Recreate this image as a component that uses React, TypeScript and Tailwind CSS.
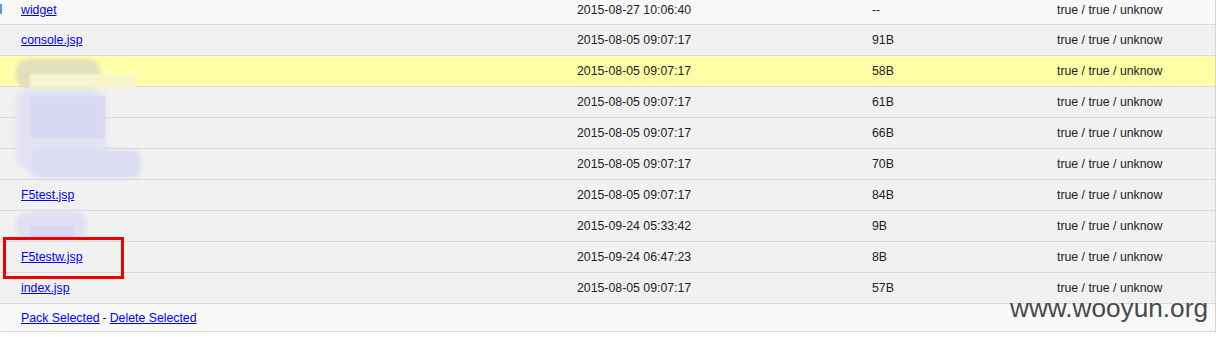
import React from "react";

interface Row {
  name: string;
  date: string;
  size: string;
  blurred?: boolean;
  highlight?: boolean;
}

const rows: Row[] = [
  { name: "console.jsp", date: "2015-08-05 09:07:17", size: "91B" },
  { name: "", date: "2015-08-05 09:07:17", size: "58B", blurred: true, highlight: true },
  { name: "", date: "2015-08-05 09:07:17", size: "61B", blurred: true },
  { name: "", date: "2015-08-05 09:07:17", size: "66B", blurred: true },
  { name: "", date: "2015-08-05 09:07:17", size: "70B", blurred: true },
  { name: "F5test.jsp", date: "2015-08-05 09:07:17", size: "84B" },
  { name: "", date: "2015-09-24 05:33:42", size: "9B", blurred: true },
  { name: "F5testw.jsp", date: "2015-09-24 06:47:23", size: "8B" },
  { name: "index.jsp", date: "2015-08-05 09:07:17", size: "57B" },
];

const cols = "grid grid-cols-[577px_295px_185px_1fr] items-center";

const FileRow: React.FC<{ row: Row }> = ({ row }) => (
  <div
    className={`${cols} h-[31px] border-b border-[#dadada] ${
      row.highlight ? "bg-[#ffffa8]" : "bg-[#f1f1f1]"
    }`}
  >
    <div className="pl-[21px]">
      {row.name && <a className="text-[#0000ff] underline">{row.name}</a>}
    </div>
    <div>{row.date}</div>
    <div>{row.size}</div>
    <div>true / true / unknow</div>
  </div>
);

export default function App() {
  return (
    <div className="relative w-[1216px] h-[337px] overflow-hidden bg-white text-[12.3px] text-[#222] font-['Liberation_Sans',Arial,sans-serif]">
      <div className="border-r border-[#d5d5d5]">
        {/* first row, cut off at the top */}
        <div className={`${cols} h-[31px] -mt-[6px] pt-[2px] border-b border-[#dadada] bg-[#f9f9f9]`}>
          <div className="pl-[21px]">
            <a className="text-[#0000ff] underline">widget</a>
          </div>
          <div>2015-08-27 10:06:40</div>
          <div>--</div>
          <div>true / true / unknow</div>
        </div>

        {rows.map((r, i) => (
          <FileRow key={i} row={r} />
        ))}

        {/* footer */}
        <div className="h-[28px] flex items-center pt-[2px] pl-[21px] border-b border-[#dadada] bg-[#f9f9f9]">
          <a className="text-[#0000ff] underline">Pack Selected</a>
          <span className="mx-[3px]">-</span>
          <a className="text-[#0000ff] underline">Delete Selected</a>
        </div>
      </div>

      {/* checkbox edge top-left */}
      <div className="absolute left-0 top-[4px] w-[2px] h-[10px] bg-[#5a9ae0]" />

      {/* mosaic blurs */}
      <div className="absolute left-[16px] top-[59px] w-[84px] h-[30px] rounded-[12px] bg-[#e0e0bc] blur-[2px]" />
      <div className="absolute left-[30px] top-[74px] w-[106px] h-[14px] bg-[#f6f6cc] blur-[1px]" />
      <div className="absolute left-[16px] top-[90px] w-[90px] h-[80px] rounded-[14px] bg-[#e2e2f4] blur-[2px]" />
      <div className="absolute left-[30px] top-[96px] w-[75px] h-[42px] bg-[#d8d8f2] blur-[1px]" />
      <div className="absolute left-[30px] top-[150px] w-[110px] h-[28px] rounded-[8px] bg-[#dcdcf3] blur-[2px]" />
      <div className="absolute left-[16px] top-[212px] w-[70px] h-[28px] rounded-[10px] bg-[#e0e0f2] blur-[2px]" />
      <div className="absolute left-[30px] top-[226px] w-[44px] h-[12px] bg-[#d6d6f2] blur-[1px]" />

      {/* highlight box */}
      <div className="absolute left-[3px] top-[237px] w-[121px] h-[42px] border-[3px] border-[#ee0000]" />

      {/* watermark */}
      <div className="absolute left-[1010px] top-[295px] text-[26.2px] leading-none text-[#4a4a4a] font-['Liberation_Sans',Arial,sans-serif]">
        www.wooyun.org
      </div>
    </div>
  );
}
